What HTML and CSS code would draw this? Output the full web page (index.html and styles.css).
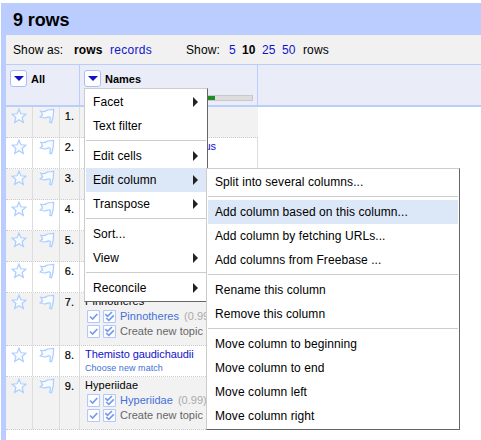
FILE: index.html
```html
<!DOCTYPE html>
<html lang="en">
<head>
<meta charset="utf-8">
<title>9 rows</title>
<link rel="stylesheet" href="styles.css">
</head>
<body>
<svg class="defs" aria-hidden="true">
  <symbol id="star" viewBox="0 0 16 16"><path d="M8 1.2 9.9 5.8 14.9 6.2 11.1 9.5 12.3 14.4 8 11.8 3.7 14.4 4.9 9.5 1.1 6.2 6.1 5.8Z"/></symbol>
  <symbol id="flag" viewBox="0 0 16 16"><path d="M14.6 1.2C14.8 5 14 10.5 12.6 14.7L10.8 14.2 11.4 9.4C9.4 7.6 7.6 10.2 5.3 10L1.2 9 3.6 6.8 1.8 3.2C4.4 4 6.2 3.6 7.5 2.5 9.5.8 12 2.6 14.6 1.2Z"/></symbol>
  <symbol id="check" viewBox="0 0 13 13"><rect x=".5" y=".5" width="12" height="12" rx="1"/><path d="M3 6.5 5.6 9 10.3 4"/></symbol>
  <symbol id="checks" viewBox="0 0 13 13"><rect x=".5" y=".5" width="12" height="12" rx="1"/><path d="M2.3 4.2 4.5 6.3 9 2M3.2 8 5.8 10.4 10.8 5.4"/></symbol>
</svg>
<div class="panel">
  <div class="title">9 rows</div>
  <div class="controls"><span class="as">Show as:</span><b class="rows">rows</b><a class="records">records</a><span class="show">Show:</span><a class="n5">5</a><b class="n10">10</b><a class="n25">25</a><a class="n50">50</a><span>rows</span></div>
  <div class="head">
    <div class="all"><span class="drop"></span><b>All</b></div>
    <div class="names"><span class="drop"></span><b>Names</b><div class="bar"><div class="fill"></div></div></div>
  </div>
  <div class="grid">
    <div class="row odd"><i><svg><use href="#star"/></svg></i><i><svg><use href="#flag"/></svg></i><span class="num">1.</span><div class="cell"></div></div>
    <div class="row"><i><svg><use href="#star"/></svg></i><i><svg><use href="#flag"/></svg></i><span class="num">2.</span><div class="cell"><a class="tail">us</a></div></div>
    <div class="row odd"><i><svg><use href="#star"/></svg></i><i><svg><use href="#flag"/></svg></i><span class="num">3.</span><div class="cell"></div></div>
    <div class="row"><i><svg><use href="#star"/></svg></i><i><svg><use href="#flag"/></svg></i><span class="num">4.</span><div class="cell"></div></div>
    <div class="row odd"><i><svg><use href="#star"/></svg></i><i><svg><use href="#flag"/></svg></i><span class="num">5.</span><div class="cell"></div></div>
    <div class="row"><i><svg><use href="#star"/></svg></i><i><svg><use href="#flag"/></svg></i><span class="num">6.</span><div class="cell"></div></div>
    <div class="row odd tall"><i><svg><use href="#star"/></svg></i><i><svg><use href="#flag"/></svg></i><span class="num">7.</span><div class="cell"><div class="name">Pinnotheres</div>
      <div class="cand"><svg><use href="#check"/></svg><svg><use href="#checks"/></svg><a>Pinnotheres</a><em>(0.99)</em></div>
      <div class="cand"><svg><use href="#check"/></svg><svg><use href="#checks"/></svg><span>Create new topic</span></div></div></div>
    <div class="row"><i><svg><use href="#star"/></svg></i><i><svg><use href="#flag"/></svg></i><span class="num">8.</span><div class="cell"><a class="name match">Themisto gaudichaudii</a><a class="choose">Choose new match</a></div></div>
    <div class="row odd tall"><i><svg><use href="#star"/></svg></i><i><svg><use href="#flag"/></svg></i><span class="num">9.</span><div class="cell"><div class="name">Hyperiidae</div>
      <div class="cand"><svg><use href="#check"/></svg><svg><use href="#checks"/></svg><a>Hyperiidae</a><em>(0.99)</em></div>
      <div class="cand"><svg><use href="#check"/></svg><svg><use href="#checks"/></svg><span>Create new topic</span></div></div></div>
  </div>
</div>
<div class="menu main">
  <div class="item sub">Facet</div>
  <div class="item">Text filter</div>
  <hr>
  <div class="item sub">Edit cells</div>
  <div class="item sub on">Edit column</div>
  <div class="item sub">Transpose</div>
  <hr>
  <div class="item">Sort...</div>
  <div class="item sub">View</div>
  <hr>
  <div class="item sub">Reconcile</div>
</div>
<div class="menu column">
  <div class="item">Split into several columns...</div>
  <hr>
  <div class="item on">Add column based on this column...</div>
  <div class="item">Add column by fetching URLs...</div>
  <div class="item">Add columns from Freebase ...</div>
  <hr>
  <div class="item">Rename this column</div>
  <div class="item">Remove this column</div>
  <hr>
  <div class="item">Move column to beginning</div>
  <div class="item">Move column to end</div>
  <div class="item">Move column left</div>
  <div class="item">Move column right</div>
</div>
</body>
</html>
```
FILE: styles.css
```css
* { box-sizing: border-box; }
body { margin: 0; width: 481px; height: 440px; overflow: hidden; background: #fff; font: 12px/16px "Liberation Sans", Arial, sans-serif; color: #000; }
.defs { display: none; }
a { color: #11c; }
.panel { margin: 3px 0 0 1px; height: 437px; border-left: 5px solid #bbccff; }
.title { height: 32px; padding-left: 7px; background: #bbccff; font-size: 18px; line-height: 34px; font-weight: bold; letter-spacing: -.1px; }
.controls { display: flex; height: 30px; padding-left: 7px; background: #f1f1f1; border-bottom: 1px solid #bbccff; line-height: 30px; letter-spacing: .12px; }
.as { width: 61px; }
.rows { width: 36px; }
.records { width: 76px; letter-spacing: .3px; }
.show { width: 43px; }
.n5 { width: 13px; }
.n10 { width: 20px; }
.n25 { width: 20px; }
.n50 { width: 21px; }
.head { display: flex; height: 42px; background: #eaecf8; border-bottom: 2px solid #bbccff; font-size: 11px; }
.head b { line-height: 18px; }
.all, .names { display: flex; gap: 4px; padding: 5px 0 0 4px; border-right: 1px solid #bbccff; }
.all { width: 74px; }
.names { width: 178px; flex-wrap: wrap; align-content: flex-start; row-gap: 7px; }
.drop { display: flex; width: 17px; height: 17px; border: 1px solid #a9bdfb; border-radius: 3px; background: #fff; align-items: center; justify-content: center; }
.drop::before { content: ""; border: 5px solid transparent; border-top-color: #11c; border-bottom: 0; }
.bar { width: 168px; height: 6px; margin-left: 1px; border: 1px solid #c8c8c8; background: #ddd; }
.fill { width: 129px; height: 4px; background: #228b22; }
.grid { width: 252px; }
.row { display: flex; height: 31px; border-bottom: 1px dotted #ccc; }
.tall { height: 53px; }
.odd { background: #f2f2f2; }
.row i { display: block; width: 27px; padding: 1px 0 0 5px; border-right: 1px solid #ddd; }
.row i + i { padding-left: 6px; }
.row i svg { display: block; width: 16px; height: 16px; fill: #f8fbff; stroke: #aaceff; stroke-width: 1.2; }
.num { width: 20px; padding: 1px 5px 0 0; border-right: 1px solid #ddd; font-size: 11px; text-align: right; -webkit-text-stroke: .2px #000; }
.cell { width: 178px; padding: 2px 0 0 5px; border-right: 1px solid #ddd; font-size: 11px; line-height: 13px; white-space: nowrap; }
.odd .cell { border-right-color: #f2f2f2; }
.name, .choose { display: block; }
.name { letter-spacing: .05px; }
.match { letter-spacing: -.07px; }
.choose { padding-top: 1px; color: #4370d6; font-size: 9px; letter-spacing: .05px; }
.tail { display: block; width: 131px; text-align: right; }
.name + .cand { margin-top: 1px; }
.cand { display: flex; height: 15px; padding-left: 2px; gap: 3px; line-height: 15px; color: #666; letter-spacing: .03px; }
.cand svg { width: 13px; height: 13px; margin-top: 1px; fill: #fff; stroke: #b4c9fa; flex: none; }
.cand svg + a, .cand svg + span { margin-left: 1px; }
.cand a { color: #4370d6; }
.cand em { color: #aaa; font-style: normal; margin-left: 2px; }
.cand use { stroke-width: 1.2; }
#check path, #checks path { fill: none; stroke: #7799ed; stroke-width: 1.7; }
.menu { position: absolute; padding: 1px; border: 1px solid #ccc; border-right-color: #666; border-bottom-color: #666; background: #fff; }
.main { left: 84px; top: 88px; width: 124px; height: 214px; }
.column { left: 206px; top: 168px; width: 254px; height: 262px; }
.item { display: flex; height: 24px; padding: 0 8px 0 7px; line-height: 24px; align-items: center; justify-content: space-between; letter-spacing: .08px; white-space: nowrap; }
.on { background: #dce8f8; }
.sub::after { content: ""; border: 5px solid transparent; border-left-color: #222; border-right: 0; }
hr { height: 1px; margin: 2px 0 3px; border: 0; background: #ccc; }
```
